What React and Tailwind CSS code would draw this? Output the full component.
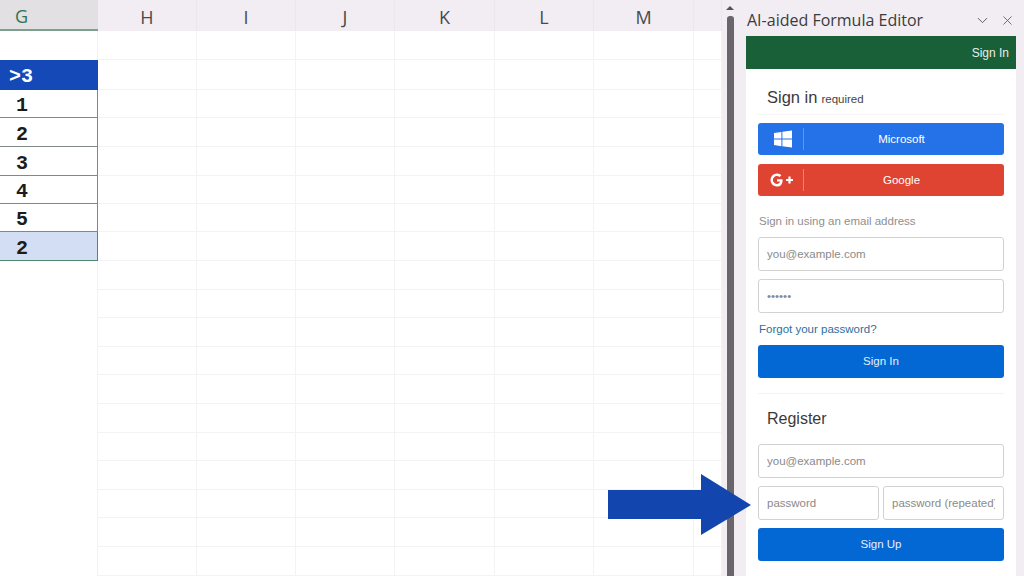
import React from 'react';
import { ChevronDown, X } from 'lucide-react';

const columns = [
  { label: 'G', width: 'w-[98px]', active: true },
  { label: 'H', width: 'w-[99px]' },
  { label: 'I', width: 'w-[99px]' },
  { label: 'J', width: 'w-[99px]' },
  { label: 'K', width: 'w-[100px]' },
  { label: 'L', width: 'w-[99px]' },
  { label: 'M', width: 'w-[100px]' },
  { label: '', width: 'flex-1' },
];

const cells = [
  { text: '', h: 'h-[29px]' },
  { text: '>3', h: 'h-[30px]', kind: 'head' },
  { text: '1', h: 'h-[28px]', kind: 'data' },
  { text: '2', h: 'h-[29px]', kind: 'data' },
  { text: '3', h: 'h-[29px]', kind: 'data' },
  { text: '4', h: 'h-[28px]', kind: 'data' },
  { text: '5', h: 'h-[28px]', kind: 'data' },
  { text: '2', h: 'h-[29px]', kind: 'sel' },
];

const emptyRows = Array.from({ length: 11 });

const cellStyle = {
  head: 'bg-[#1649b8] text-white border-b border-r border-[#1649b8] pl-[9px]',
  data: 'bg-white text-[#1c1c1c] border-b border-r border-[#7d8a86] pl-[16px]',
  sel: 'bg-[#d3ddf3] text-[#1c1c1c] border-b border-r border-[#4f8a6c] pl-[16px]',
};

const Field = ({ placeholder, className = 'w-full' }) => (
  <div className={`${className} h-[34px] shrink-0 flex items-center bg-white border border-[#d2d2d2] rounded-[3px] pl-[8px] pr-[8px] pt-[1px] text-[11.5px] text-[#8a8a8a]`}>
    <span className="block overflow-hidden whitespace-nowrap">{placeholder}</span>
  </div>
);

const SheetRow = ({ cell }) => (
  <div className={`flex ${cell.h}`}>
    <div className={`w-[98px] flex items-center pt-[5px] font-['Liberation_Mono',monospace] font-bold text-[20px] ${cell.kind ? cellStyle[cell.kind] : 'border-r border-[#f3f2f3]'}`}>
      {cell.text}
    </div>
    {columns.slice(1).map((c, i) => (
      <div key={i} className={`${c.width} border-b border-r border-[#f4f3f4]`} />
    ))}
  </div>
);

const App = () => {
  return (
    <div className="relative w-[1024px] h-[576px] overflow-hidden flex bg-[#f1edf3] font-['Liberation_Sans',sans-serif]">
      {/* hoja */}
      <div className="w-[722px] bg-white flex flex-col">
        <div className="flex h-[31px] shrink-0 bg-[#f1edf3] font-['Open_Sans',sans-serif] text-[18px] text-[#4a4a4a]">
          {columns.map((c, i) => (
            <div key={i} className={`${c.width} flex items-center justify-center pt-[3px] ${c.active ? 'bg-[#e2e0e2] text-[#2f7355] border-b-2 border-[#7fa08f] pr-[55px]' : 'border-r border-[#ebe7ed]'}`}>
              {c.label}
            </div>
          ))}
        </div>
        {cells.map((cell, i) => <SheetRow key={i} cell={cell} />)}
        {emptyRows.map((_, i) => (
          <SheetRow key={i} cell={{ text: '', h: 'h-[28.6px]' }} />
        ))}
      </div>

      {/* scrollbar */}
      <div className="w-[24px] flex flex-col items-center pr-[8px]">
        <div className="mt-[6px] w-0 h-0 border-l-[4px] border-r-[4px] border-b-[4px] border-l-transparent border-r-transparent border-b-[#55505a]" />
        <div className="mt-[6px] w-[7px] flex-1 bg-[#6a656c] rounded-t-[3px]" />
      </div>

      {/* panel */}
      <div className="flex-1 flex flex-col">
        <div className="h-[36px] shrink-0 flex items-center justify-between pt-[4px] pl-[1px] pr-[9px]">
          <span className="font-['Open_Sans',sans-serif] text-[16px] text-[#3c3c3c] whitespace-nowrap">AI-aided Formula Editor</span>
          <div className="flex items-center gap-[9px] text-[#555]">
            <ChevronDown size={17} strokeWidth={1.3} />
            <X size={15} strokeWidth={1.3} />
          </div>
        </div>
        <div className="w-[270px] flex-1 bg-white flex flex-col">
          <div className="h-[33px] shrink-0 bg-[#196038] flex items-center justify-end pr-[7px] text-[12px] text-[#e6efe9]">Sign In</div>
          <div className="px-[12px] flex-1 flex flex-col">
            <div className="h-[46px] shrink-0 flex items-end pb-[9px] pl-[10px] border-b border-[#f6f6f6] -mx-[1px]">
              <span className="text-[16.5px] text-[#3a3a3a] leading-none">Sign in</span>
              <span className="ml-[4px] text-[11.5px] text-[#444] leading-none">required</span>
            </div>
            <div className="mt-[8px] h-[32px] shrink-0 bg-[#2471e8] rounded-[3px] flex items-center text-white text-[11.5px]">
              <div className="w-[46px] h-[22px] pl-[4px] flex items-center justify-center border-r border-[#5e96ee]">
                <svg width="18" height="18" viewBox="0 0 18 18" fill="#fff"><path d="M0 3l7.4-1v6.6H0zM8.4 1.8L18 .4v8.2H8.4zM0 9.6h7.4v6.6L0 15zM8.4 9.6H18v8L8.4 16.3z" /></svg>
              </div>
              <div className="flex-1 text-center pr-[5px] pt-[1px]">Microsoft</div>
            </div>
            <div className="mt-[9px] h-[32px] shrink-0 bg-[#df4332] rounded-[3px] flex items-center text-white text-[11.5px]">
              <div className="w-[46px] h-[22px] pl-[5px] flex items-center justify-center border-r border-[#e98378]">
                <svg width="26" height="14" viewBox="0 0 26 14" fill="none">
                  <path d="M12.5 6.2H7v2.4h3.1C9.6 10.2 8.4 11 7 11a4 4 0 1 1 2.6-7l1.8-1.8A6.5 6.5 0 1 0 7 13.5c3.8 0 6-2.7 5.5-7.3z" fill="#fff" />
                  <path d="M19.5 3.500v7M16 7h7" stroke="#fff" strokeWidth="2.2" />
                </svg>
              </div>
              <div className="flex-1 text-center pr-[5px] pt-[1px]">Google</div>
            </div>
            <div className="mt-[18px] pl-[1px] text-[11.5px] leading-[14px] text-[#8f8f8f]">Sign in using an email address</div>
            <Field placeholder="you@example.com" className="w-full mt-[9px]" />
            <Field placeholder="••••••" className="w-full mt-[8px]" />
            <div className="mt-[9px] pl-[1px] text-[11.5px] leading-[14px] text-[#2b6f9e]">Forgot your password?</div>
            <div className="mt-[9px] h-[33px] shrink-0 bg-[#0468d4] rounded-[3px] flex items-center justify-center text-[11.5px] text-[#e4f0fb]">Sign In</div>
            <div className="mt-[15px] border-t border-[#f3f3f3]" />
            <div className="mt-[16px] pl-[9px] text-[16px] leading-[18px] text-[#3a3a3a]">Register</div>
            <Field placeholder="you@example.com" className="w-full mt-[16px]" />
            <div className="mt-[8px] flex justify-between">
              <Field placeholder="password" className="w-[121px]" />
              <Field placeholder="password (repeated)" className="w-[121px]" />
            </div>
            <div className="mt-[8px] h-[33px] shrink-0 bg-[#0468d4] rounded-[3px] flex items-center justify-center text-[11.5px] text-[#e4f0fb]">Sign Up</div>
          </div>
        </div>
      </div>

      {/* flecha */}
      <svg className="absolute left-[608px] top-[474px]" width="144" height="62" viewBox="0 0 144 62">
        <path d="M0 16H93V0L143 31 93 61V45H0z" fill="#1246ae" />
      </svg>
    </div>
  );
};

export default App;
